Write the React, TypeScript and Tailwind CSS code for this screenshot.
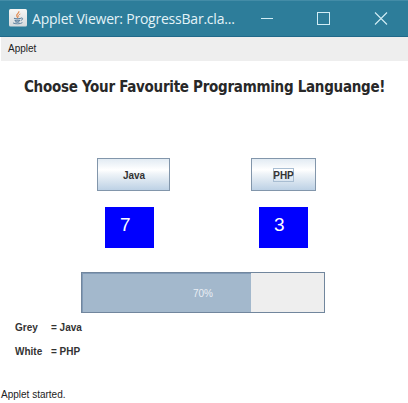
import type { ReactNode } from 'react';

const java = 7;
const php = 3;
const percent = (java / (java + php)) * 100;

function JavaIcon() {
  return (
    <svg className="ml-[9px] mt-[8px] h-[18px] w-[18px] shrink-0" viewBox="0 0 18 18" fill="none">
      <defs>
        <linearGradient id="tile" x1="0" y1="0" x2="0" y2="1">
          <stop offset="0" stopColor="#f7f7f5" />
          <stop offset="1" stopColor="#d5dadd" />
        </linearGradient>
      </defs>
      <rect width="18" height="17.5" rx="1.5" fill="url(#tile)" />
      <path d="M9.8 2.3c.8 2.1-3 2.7-2 4.8.3.7 1 1.1 1 1.9" stroke="#e08a50" strokeWidth="1.2" />
      <path d="M11.3 5c-2 .9-2.4 1.6-1.5 2.8" stroke="#e08a50" strokeWidth="0.9" />
      <path d="M5 9.2c1.5.6 5.3.6 6.8 0M5.6 11.2c1.4.6 4.1.6 5.4 0M6.2 12.8c1.2.4 3.2.4 4.2 0" stroke="#557c9b" strokeWidth="1.1" />
      <path d="M12 9c2.4-.5 2 2-.2 2.4M4 13.9c2 1.4 7.6 1.2 9.4-.3" stroke="#557c9b" strokeWidth="0.9" />
    </svg>
  );
}

function Panel({ children, count, buttonClass }: { children: ReactNode; count: number; buttonClass: string }) {
  return (
    <div>
      <button
        className={`flex h-[33px] items-center justify-center border border-[#8296ab] bg-[linear-gradient(180deg,#e2ebf3_0%,#ffffff_35%,#eff4f8_48%,#bdd1e5_100%)] text-[10px] font-bold text-[#333333] ${buttonClass}`}
      >
        {children}
      </button>
      <div className="ml-2 mt-4 h-[41px] w-[49px] bg-[#0000ff] pl-[15px] pt-[6px] text-[19px] leading-[23px] text-white">
        {count}
      </div>
    </div>
  );
}

export default function App() {
  return (
    <div className="flex h-[403px] w-[408px] flex-col overflow-hidden bg-white font-['Liberation_Sans',Arial,sans-serif] text-[#333333]">
      <header className="flex h-[37px] shrink-0 border-b border-t border-b-[#20698a] border-t-[#438ca7] bg-[#2d7d9a]">
        <JavaIcon />
        <h1 className="ml-[5px] mt-[8px] w-[218px] shrink-0 whitespace-nowrap font-['Open_Sans',sans-serif] text-[14px] leading-5 tracking-[-0.22px] text-[#e3f3f8]">
          Applet Viewer: ProgressBar.cla...
        </h1>
        <svg className="ml-[10px] mt-[10px] h-[15px] w-[130px] shrink-0" viewBox="0 0 130 15" fill="none" stroke="#d2edf5">
          <path d="M1 7.5h12" />
          <rect x="57.5" y="1.5" width="12" height="12" />
          <path d="m115 1.5 12 12m0-12-12 12" strokeWidth="1.1" />
        </svg>
      </header>
      <nav className="ml-px h-6 shrink-0 bg-[#eeeeee] pl-[7px] pt-[5px] text-[10px] leading-[14px] text-[#222222]">Applet</nav>
      <main className="flex grow flex-col">
        <h2 className="ml-6 mt-4 whitespace-nowrap font-['DejaVu_Sans_Condensed','DejaVu_Sans',sans-serif] text-[15px] font-bold leading-5 tracking-[-0.28px] text-[#282828] [font-stretch:condensed]">
          Choose Your Favourite Programming Languange!
        </h2>
        <section className="ml-[97px] mt-[61px] flex h-[90px] gap-[81px]">
          <Panel count={java} buttonClass="w-[73px] pl-px pt-0.5">Java</Panel>
          <Panel count={php} buttonClass="w-[65px] pt-px">
            <span className="flex h-[14px] w-[21px] items-center justify-center border border-[#a8bdd2]">PHP</span>
          </Panel>
        </section>
        <div className="ml-[81px] mt-6 grid h-[41px] w-[244px] border border-[#71869d] bg-[#eeeeee]">
          <div className="col-start-1 row-start-1 border-l border-t border-[#829bb7] bg-[#a3b8cc]" style={{ width: `${percent}%` }} />
          <span className="col-start-1 row-start-1 self-center pt-px text-center text-[10px] text-[#e9eef4]">{percent}%</span>
        </div>
        <dl className="ml-[15px] mt-2 grid grid-cols-[36px_60px] gap-y-[10px] text-[10px] font-bold leading-[14px]">
          <dt>Grey</dt>
          <dd>= Java</dd>
          <dt>White</dt>
          <dd>= PHP</dd>
        </dl>
      </main>
      <footer className="mb-px ml-px text-[10px] leading-[14px] text-[#222222]">Applet started.</footer>
    </div>
  );
}
